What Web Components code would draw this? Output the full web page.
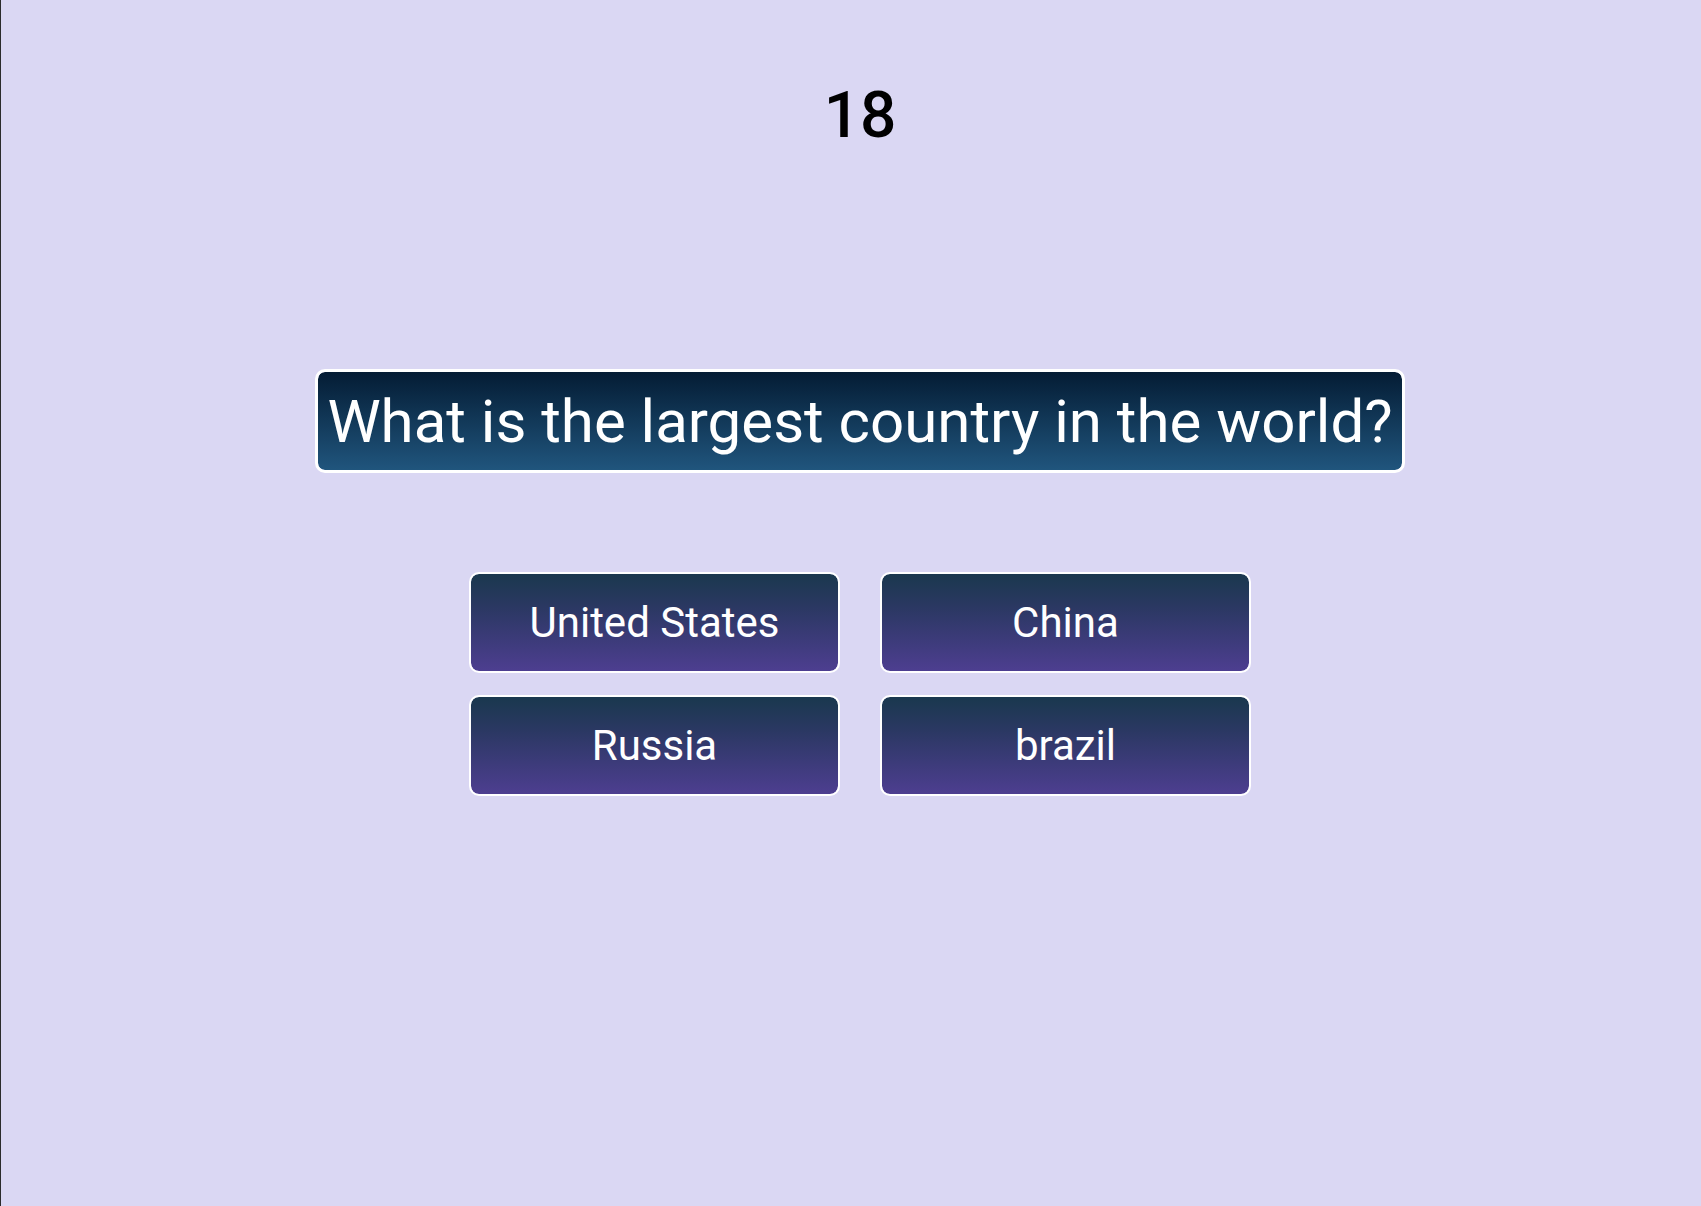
<!DOCTYPE html>
<html lang="en">
<head>
<meta charset="utf-8">
<title>Quiz</title>
<style>
html, body { margin: 0; min-height: 100vh; box-sizing: border-box; }
body { background: #dad7f3; font-family: Roboto, "Liberation Sans", sans-serif; }
</style>
</head>
<body>
<quiz-page>
  <quiz-timer slot="timer">18</quiz-timer>
  <quiz-question>What is the largest country in the world?</quiz-question>
  <quiz-answers>
    <quiz-answer>United States</quiz-answer>
    <quiz-answer>China</quiz-answer>
    <quiz-answer>Russia</quiz-answer>
    <quiz-answer>brazil</quiz-answer>
  </quiz-answers>
</quiz-page>
<script>
const define = (name, markup) => {
  const template = document.createElement('template');
  template.innerHTML = markup;
  customElements.define(name, class extends HTMLElement {
    constructor() {
      super();
      this.attachShadow({ mode: 'open' }).append(template.content.cloneNode(true));
    }
  });
};

define('quiz-page', `
  <style>
    :host { display: block; box-sizing: border-box; min-height: 100vh; border-left: 1px solid #2b2b2b; padding: 78px 0 78px 18px; }
    main { display: flex; flex-direction: column; align-items: center; }
    section { display: flex; flex-direction: column; align-items: center; gap: 99px; margin-top: 215px; }
  </style>
  <main><slot name="timer"></slot><section><slot></slot></section></main>`);

define('quiz-timer', `
  <style>
    :host { display: block; color: #000; font-size: 64px; font-weight: 500; line-height: 76px; }
  </style>
  <div role="timer"><slot></slot></div>`);

define('quiz-question', `
  <style>
    :host { display: block; }
    h1 {
      margin: 0; padding: 12px 9px 10px; text-align: center;
      font-size: 60px; font-weight: 400; line-height: 76px; color: #fff;
      border: 3px solid #fff; border-radius: 10px;
      background: linear-gradient(#041c34, #20557d) padding-box;
    }
  </style>
  <h1><slot></slot></h1>`);

define('quiz-answers', `
  <style>
    :host { display: grid; grid-template-columns: repeat(2, minmax(0, 371px)); gap: 22px 40px; width: 782px; max-width: 100%; }
  </style>
  <slot></slot>`);

define('quiz-answer', `
  <style>
    :host { display: block; }
    button {
      display: block; width: 100%; margin: 0; padding: 20px 12px;
      font: 400 42px/57px Roboto, "Liberation Sans", sans-serif; color: #fff; cursor: pointer;
      border: 2px solid #fff; border-radius: 10px;
      background: linear-gradient(#1a384e, #2b3863 35%, #4d3e90) padding-box;
    }
  </style>
  <button type="button"><slot></slot></button>`);
</script>
</body>
</html>
